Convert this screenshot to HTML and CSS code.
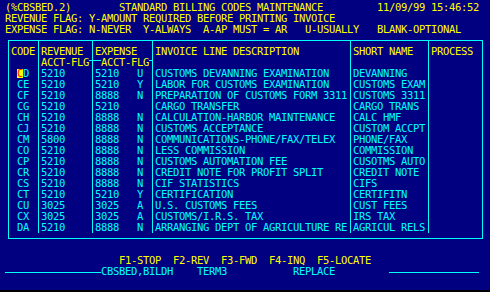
FILE: index.html
```html
<html>

<head>
    <meta charset="UTF-8">
    <link rel="stylesheet" href="styles.css">
</head>

<body>
    <div class="screen">
        <div class="line">(%CBSBED.2)        STANDARD BILLING CODES MAINTENANCE         11/09/99 15:46:52</div>
        <div class="line">REVENUE FLAG: Y-AMOUNT REQUIRED BEFORE PRINTING INVOICE</div>
        <div class="line">EXPENSE FLAG: N-NEVER  Y-ALWAYS  A-AP MUST = AR   U-USUALLY   BLANK-OPTIONAL</div>

        <div class="box">
            <div class="col w-code">
                <div class="hd">CODE</div>
                <div class="hd2"></div>
                <div class="data"><div class="first"> <span class="cur">C</span><span>D</span></div> CE
 CF
 CG
 CH
 CJ
 CM
 CO
 CP
 CR
 CS
 CT
 CU
 CX
 DA</div>
            </div>
            <div class="col w-rev">
                <div class="hd">REVENUE</div>
                <div class="hd2 split"><span>ACCT-FLG</span><span class="dash"></span></div>
                <div class="data">5210
5210
5210
5210
5210
5210
5800
5210
5210
5210
5210
5210
3025
3025
5210</div>
            </div>
            <div class="col w-exp">
                <div class="hd">EXPENSE</div>
                <div class="hd2 split flush"><span class="dash lead"></span><span>ACCT-FLG</span><span class="dash"></span></div>
                <div class="data">5210   U
5210   Y
8888   N
5210
8888   N
8888   N
8888   N
8888   N
8888   N
8888   N
8888   N
5210   Y
3025   A
3025   A
8888   N</div>
            </div>
            <div class="col w-desc">
                <div class="hd">INVOICE LINE DESCRIPTION</div>
                <div class="hd2"></div>
                <div class="data">CUSTOMS DEVANNING EXAMINATION
LABOR FOR CUSTOMS EXAMINATION
PREPARATION OF CUSTOMS FORM 3311
CARGO TRANSFER
CALCULATION-HARBOR MAINTENANCE
CUSTOMS ACCEPTANCE
COMMUNICATIONS-PHONE/FAX/TELEX
LESS COMMISSION
CUSTOMS AUTOMATION FEE
CREDIT NOTE FOR PROFIT SPLIT
CIF STATISTICS
CERTIFICATION
U.S. CUSTOMS FEES
CUSTOMS/I.R.S. TAX
ARRANGING DEPT OF AGRICULTURE RE</div>
            </div>
            <div class="col w-short">
                <div class="hd">SHORT NAME</div>
                <div class="hd2"></div>
                <div class="data">DEVANNING
CUSTOMS EXAM
CUSTOMS 3311
CARGO TRANS
CALC HMF
CUSTOM ACCPT
PHONE/FAX
COMMISSION
CUSOTMS AUTO
CREDIT NOTE
CIFS
CERTIFITN
CUST FEES
IRS TAX
AGRICUL RELS</div>
            </div>
            <div class="col w-proc">
                <div class="hd">PROCESS</div>
                <div class="hd2"></div>
                <div class="data"></div>
            </div>
        </div>

        <div class="line keys">                   F1-STOP  F2-REV  F3-FWD  F4-INQ  F5-LOCATE</div>
        <div class="line status">
            <span class="rule r-left"></span>
            <span>CBSBED,BILDH    TERM3           REPLACE         </span>
            <span class="rule r-right"></span>
        </div>
    </div>
</body>

</html>
```

FILE: styles.css
```css
html {
    background: #000;
}
body {
    margin: 0;
    height: 290px;
    overflow: hidden;
    background: #000080;
    color: #ffff00;
    font-family: "DejaVu Sans Mono", monospace;
    font-size: 10.5px;
    letter-spacing: -0.32px;
}
.screen {
    padding: 2px 0 0 5px;
}
.line {
    height: 11px;
    line-height: 11px;
    white-space: pre;
}
.box {
    display: flex;
    width: 473px;
    margin: 5px 0 0 3px;
    padding-bottom: 5px;
    border: 1px solid #00ffff;
}
.col {
    box-sizing: border-box;
    padding-left: 2px;
    border-left: 1px solid #00ffff;
}
.w-code {
    width: 29px;
    border-left: none;
}
.w-rev {
    width: 54px;
}
.w-exp {
    width: 60px;
}
.w-desc {
    width: 198px;
}
.w-short {
    width: 78px;
}
.w-proc {
    width: 54px;
}
.hd {
    height: 11px;
    padding-top: 5px;
    line-height: 11px;
    white-space: pre;
}
.hd2 {
    height: 11px;
    line-height: 11px;
    white-space: pre;
}
.split {
    display: flex;
}
.flush {
    margin-left: -2px;
}
.dash {
    flex: 1;
    height: 3px;
    border-bottom: 1px solid #00ffff;
}
.dash.lead {
    flex: none;
    width: 8px;
}
.data {
    color: #00ffff;
    line-height: 11px;
    height: 165px;
    white-space: pre;
}
.first {
    height: 11px;
}
.cur {
    display: inline-block;
    height: 9px;
    line-height: 9px;
    font-size: 9.9px;
    letter-spacing: 0;
    vertical-align: top;
    margin-top: 1px;
    background: #ffff00;
    color: #ff0000;
}
.keys {
    margin-top: 16px;
}
.status {
    display: flex;
    color: #00ffff;
}
.rule {
    height: 6px;
    border-bottom: 1px solid #00ffff;
}
.r-left {
    width: 96px;
}
.r-right {
    width: 90px;
}
```
